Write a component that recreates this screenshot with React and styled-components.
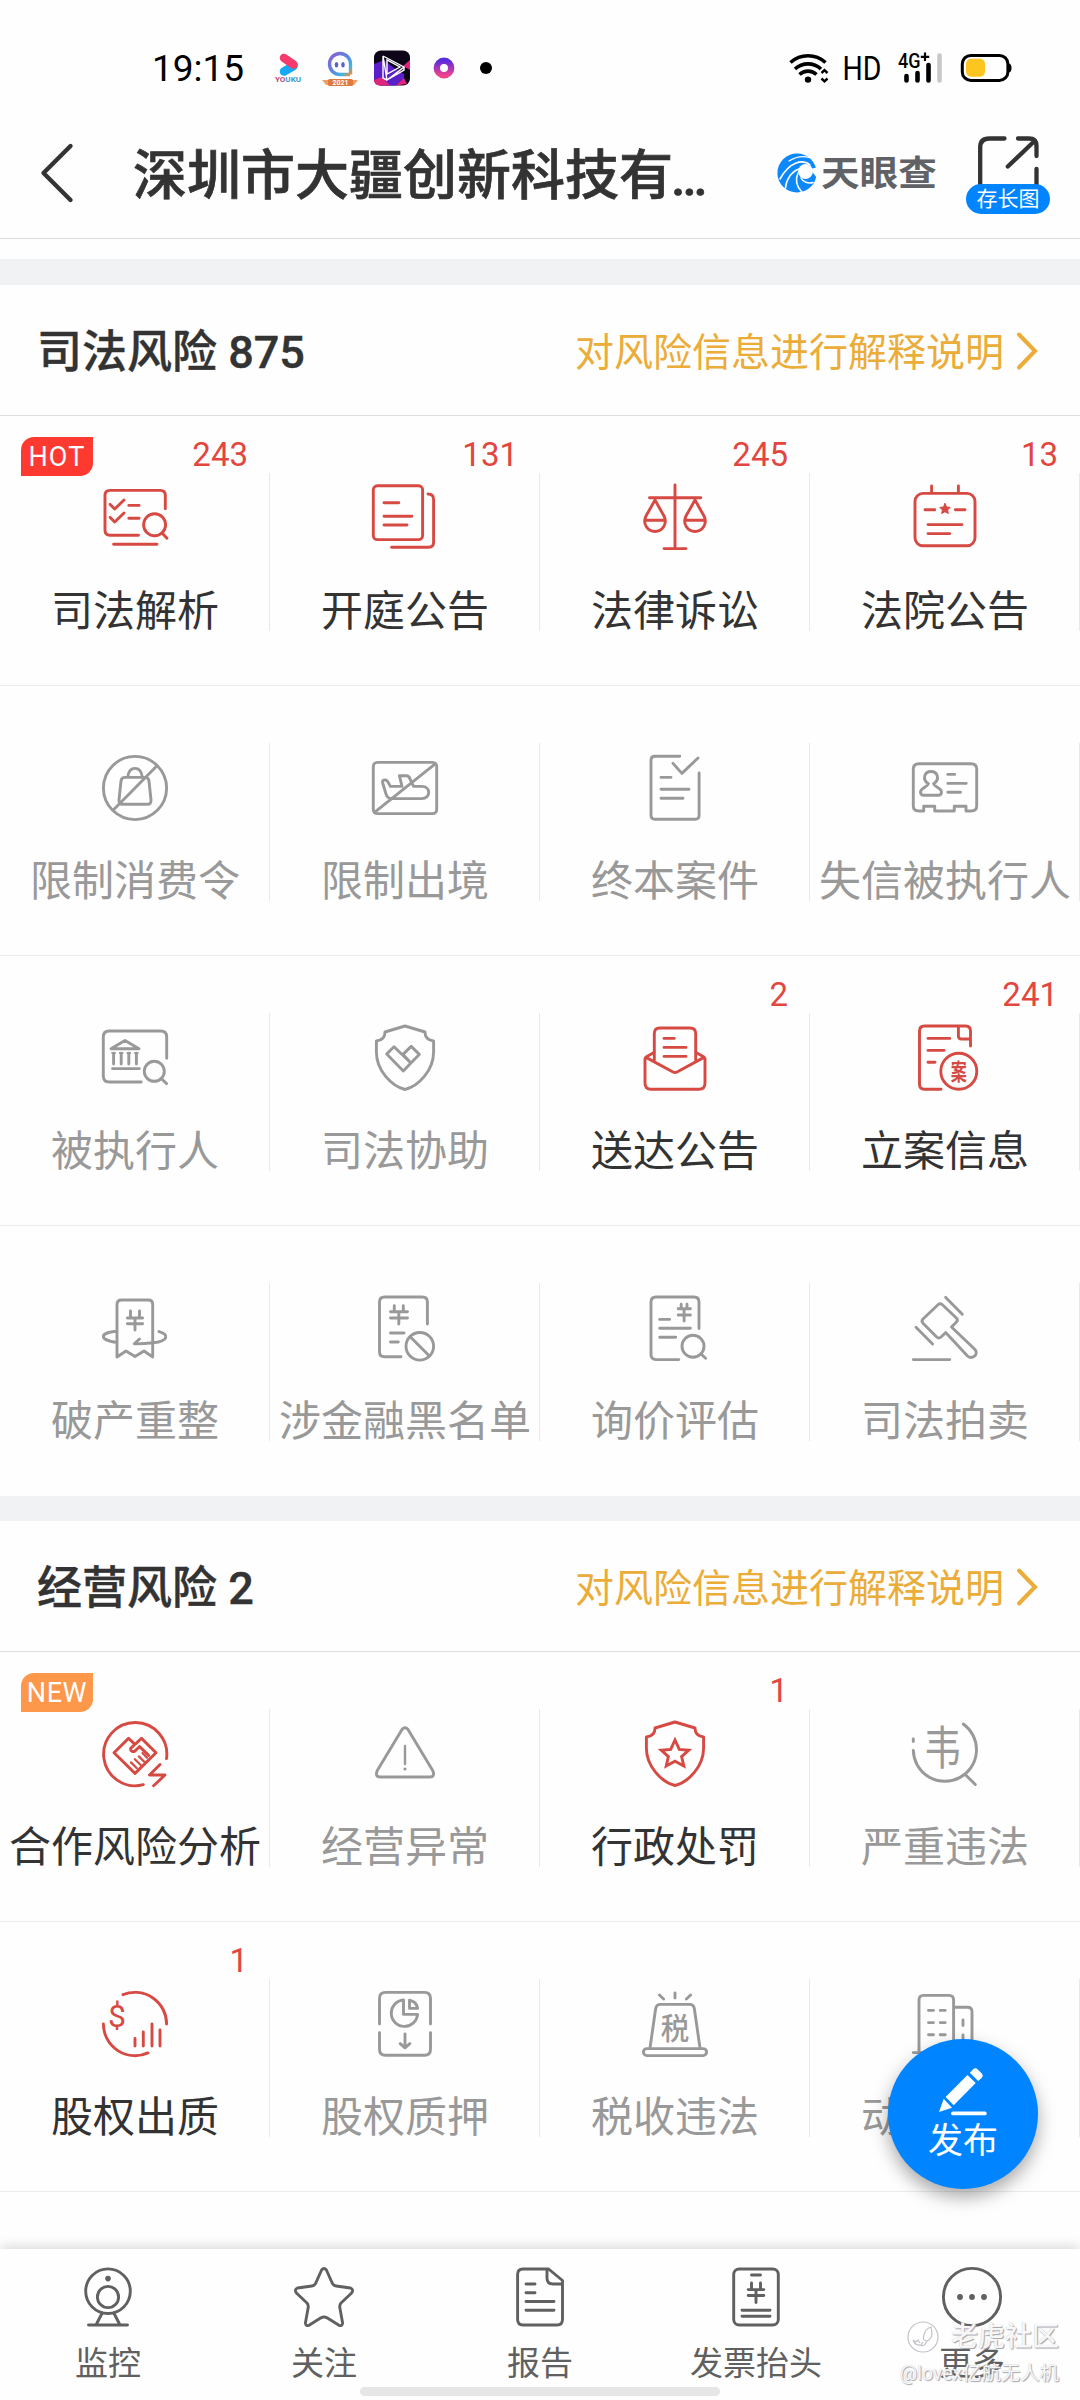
import React from "react";
import styled, { createGlobalStyle } from "styled-components";

const RED = "#d64a43";
const GREY = "#999";
const FONT = 'Roboto, "Noto Sans CJK SC", sans-serif';

const GlobalStyle = createGlobalStyle`
  * { box-sizing: border-box; }
  body { margin: 0; background: #fff; font-family: ${FONT}; }
  svg { display: block; overflow: visible; }
`;

const Screen = styled.div`
  position: relative;
  display: flex;
  flex-direction: column;
  width: 1080px;
  height: 2400px;
  overflow: hidden;
  background: #fefefe;
`;

/* ---------- status bar ---------- */

const StatusBar = styled.div`
  display: flex;
  align-items: center;
  flex: none;
  height: 108px;
  margin-top: 14px;
  padding: 0 68px 0 152px;
`;

const Clock = styled.span`
  width: 121px;
  padding-top: 1px;
  font-size: 37px;
  line-height: 44px;
  color: #000;
  white-space: nowrap;
`;

const StatusIcons = styled.div`
  display: flex;
  align-items: center;
  margin-left: ${(p) => (p.$right ? "auto" : "0")};
`;

/* ---------- title bar ---------- */

const TitleBar = styled.header`
  display: flex;
  align-items: center;
  flex: none;
  height: 131px;
  margin-top: -14px;
  padding: 0 30px 0 40px;
  border-bottom: 1px solid #dcdcde;
`;

const Title = styled.h1`
  width: 581px;
  margin: 0 0 0 59px;
  padding-top: 9px;
  font-size: 54px;
  font-weight: 500;
  line-height: 70px;
  color: #333;
  white-space: nowrap;
  -webkit-text-stroke: 0.7px #333;
`;

const Ellipsis = styled.span`
  margin-left: -2px;
  letter-spacing: -1px;
  font-size: 51px;
`;

const Brand = styled.div`
  display: flex;
  align-items: center;
  gap: 4px;
  margin-left: 63px;
`;

const BrandName = styled.span`
  font-size: 38.6px;
  line-height: 40px;
  font-weight: 700;
  color: #606266;
  white-space: nowrap;
  transform: translateY(1px) scaleY(0.9);
`;

const Share = styled.button`
  display: flex;
  flex-direction: column;
  width: 84px;
  margin-left: auto;
  padding: 0;
  border: 0;
  background: none;
`;

const SharePill = styled.span`
  width: 84px;
  height: 30px;
  border-radius: 15px;
  background: #0084ff;
  color: #fff;
  font: 400 21px/30px ${FONT};
  text-align: center;
`;

/* ---------- sections ---------- */

const Strip = styled.div`
  flex: none;
  height: 20px;
`;

const Band = styled.div`
  flex: none;
  height: ${(p) => p.$h}px;
  background: #f1f2f4;
`;

const SectionHead = styled.div`
  display: flex;
  align-items: center;
  justify-content: space-between;
  height: 131px;
  padding: 6px 42px 0 37px;
  border-bottom: 1px solid #dedede;
`;

const SectionTitle = styled.h2`
  margin: 0;
  font-size: 45px;
  font-weight: 500;
  line-height: 60px;
  color: #333;
  -webkit-text-stroke: 0.4px #333;
`;

const ExplainLink = styled.a`
  display: flex;
  align-items: center;
  gap: 12px;
  font-size: 39px;
  line-height: 50px;
  color: #ebac38;
`;

const Chevron = styled.svg`
  margin-top: -4px;
`;

const Grid = styled.div`
  display: grid;
  grid-template-columns: repeat(4, 270px);
`;

const Cell = styled.div`
  position: relative;
  display: flex;
  flex-direction: column;
  align-items: center;
  height: 270px;
  padding-top: 66px;
  border-bottom: ${(p) => (p.$last ? "0" : "1px solid #ebebeb")};
  background: linear-gradient(#e9e9e9, #e9e9e9) no-repeat right 57px / 1px 158px;
  color: ${(p) => (p.$on ? RED : GREY)};
`;

const CellLabel = styled.span`
  margin-top: 33px;
  font-size: 42px;
  line-height: 50px;
  white-space: nowrap;
  color: ${(p) => (p.$on ? "#333" : "#999")};
`;

const Count = styled.span`
  position: absolute;
  top: 20px;
  right: 22px;
  font-size: 33px;
  line-height: 38px;
  color: #e2463f;
`;

const Tag = styled.span`
  position: absolute;
  top: 21px;
  left: 21px;
  width: 72px;
  height: 39px;
  border-radius: 13px 0 13px 0;
  background: ${(p) => (p.$new ? "#fd974a" : "#fe3a30")};
  color: #fff;
  font-size: 27px;
  line-height: 41px;
  letter-spacing: ${(p) => (p.$new ? "0.6px" : "1.2px")};
  text-align: center;
`;

/* ---------- floating button ---------- */

const Publish = styled.button`
  position: absolute;
  left: 888px;
  top: 2039px;
  display: flex;
  flex-direction: column;
  align-items: center;
  gap: 5px;
  width: 150px;
  height: 150px;
  padding: 26px 0 0;
  border: 0;
  border-radius: 50%;
  background: #0084ff;
  box-shadow: 0 8px 18px rgba(0, 0, 0, 0.34);
  color: #fff;
  font: 400 35px/44px ${FONT};
`;

/* ---------- bottom navigation ---------- */

const NavBar = styled.nav`
  display: grid;
  grid-template-columns: repeat(5, 216px);
  flex: none;
  height: 151px;
  margin-top: auto;
  background: #fefefe;
  box-shadow: 0 -2px 12px rgba(0, 0, 0, 0.16);
`;

const NavItem = styled.div`
  display: flex;
  flex-direction: column;
  align-items: center;
  padding-top: 18px;
  color: #606060;
  font-size: 33px;
  line-height: 40px;
`;

const NavLabel = styled.span`
  margin-top: 17px;
`;

const HomeIndicator = styled.div`
  position: absolute;
  left: 360px;
  top: 2387px;
  width: 360px;
  height: 9px;
  border-radius: 5px;
  background: #e6e6e6;
`;

const Watermark = styled.div`
  position: absolute;
  right: 21px;
  top: 2319px;
  display: flex;
  flex-direction: column;
  align-items: flex-end;
  color: rgba(255, 255, 255, 0.92);
  text-shadow: 1px 1px 1px #a2a2aa, 0 0 1px #bcbcc2;
  white-space: nowrap;
`;

const WatermarkTop = styled.div`
  display: flex;
  align-items: center;
  gap: 12px;
  font-size: 27px;
  font-weight: 500;
  line-height: 36px;
`;

const WatermarkUser = styled.div`
  margin-top: 5px;
  font-size: 19.4px;
  line-height: 28px;
`;

/* ---------- icons ---------- */

const LineIcon = ({ size = 72, w = 2.9, children }) => (
  <svg
    width={size}
    height={size}
    viewBox={`${-size / 2} ${-size / 2} ${size} ${size}`}
    fill="none"
    stroke="currentColor"
    strokeWidth={w}
    strokeLinecap="round"
    strokeLinejoin="round"
  >
    {children}
  </svg>
);

const Glyph = ({ x, y, size, sx = 1, weight = 400, children }) => (
  <text
    transform={`translate(${x} ${y}) scale(${sx} 1)`}
    fontFamily='"Noto Sans CJK SC", sans-serif'
    fontSize={size}
    fontWeight={weight}
    textAnchor="middle"
    fill="currentColor"
    stroke="none"
  >
    {children}
  </text>
);

const SHIELD =
  "M0-32L-20-26C-20-20-23-17.5-28.6-17V-6C-28.6 12-14 28 0 31.5C14 28 28.6 12 28.6-6V-17C23-17.5 20-20 20-26Z";

const icons = {
  analysis: (
    <>
      <path d="M30.3-9.3V-22.6Q30.3-27.6 25.3-27.6H-25Q-30-27.6-30-22.6V12.3Q-30 17.3-25 17.3H3.5" />
      <path d="M-24.8-13.6L-20.3-9L-11-18M-24.8-.6L-20.3 4L-11-5M-6.2-12.6H4.1M-6.2.3H4.1M-21.4 26.3H22" />
      <circle cx="19.6" cy="6.7" r="11" />
      <path d="M27.3 15.3L32 20.2" />
    </>
  ),
  hearing: (
    <>
      <rect x="-31.7" y="-32.2" width="49.3" height="53.8" rx="4" />
      <path d="M-21-15.3H-6.2M-21-1.7H6.9M-21 7H2M23-24Q28.6-24 28.6-18.5V24.3Q28.6 29.3 23.6 29.3H-13.4" />
    </>
  ),
  scales: (
    <>
      <path d="M0-33V30.6M-25.5-20.3H25.8M-11 30.6H11" />
      <path d="M-20-18L-29-2C-33 6-27 13.5-20 13.5S-7 6-11-2ZM-30.3 2.3H-9.7" />
      <path d="M20-18L11-2C7 6 13 13.5 20 13.5S33 6 29-2ZM9.7 2.3H30.3" />
    </>
  ),
  courtNotice: (
    <>
      <rect x="-30" y="-24.6" width="60" height="52.4" rx="8" />
      <path d="M-13.4-32V-25.5M13.4-32V-25.5M-20-8.3H-10.3M10.3-8.3H20M-17 6.6H17M-17 15.6H4.8" />
      <path
        d="M0-14.5L1.6-11L5.2-10.6L2.6-8L3.3-4.5L0-6.3L-3.3-4.5L-2.6-8L-5.2-10.6L-1.6-11Z"
        fill="currentColor"
        strokeWidth="1"
      />
    </>
  ),
  noSpend: (
    <>
      <circle r="31.6" />
      <path d="M22-22.3L-21.7 22M-7.2-11.3C-6.5-17-3.5-19.6 0-19.6S6.5-17 7.2-11.3M-10-10.6H10Q13.6-10.6 14-7L16 12Q16.3 16.3 12.5 16.3H-12.5Q-16.3 16.3-16 12L-14-7Q-13.6-10.6-10-10.6Z" />
    </>
  ),
  noExit: (
    <>
      <rect x="-31.7" y="-25.6" width="63.4" height="51.2" rx="4" />
      <path d="M-30.5 24.3L30.5-24.3M-22.3-5Q-23-8-20.5-8Q-18-8.5-16.5-5L-14.5-1.6H-3L-5.6-12.3H1.5Q3.8-12.3 4.8-9.5L8.6-1.6H16.8C26 -1.6 26 10.6 16.8 10.6H-13Q-17.8 10.6-19 6Z" />
    </>
  ),
  finalCase: (
    <path d="M4.8-31.7H-20Q-24-31.7-24-27.7V27.3Q-24 31.3-20 31.3H20.1Q24.1 31.3 24.1 27.3V-15M-2-24.6L6.9-14.6L23-30M-14-10.6H-4M-14 1.3H14M-14 10.3H8" />
  ),
  dishonest: (
    <path d="M-26-24.3H26Q31.7-24.3 31.7-19V18Q31.7 23 26 23H21V18.3H9.3V23H-10.3V18.3H-21.3V23H-26Q-31.7 23-31.7 18V-19Q-31.7-24.3-26-24.3ZM-16.5-4.3C-23-8-21-16.5-14-16.5S-5-8-11.5-4.3C-10.5-1-3.5 0-3.5 4Q-3.5 7.3-7 7.3H-21Q-24.5 7.3-24.5 4C-24.5 0-17.5-1-16.5-4.3ZM2.8-13.6H9.7M2.8-4.6H21.2M2.8 4.3H15.5" />
  ),
  executed: (
    <>
      <path d="M31.7.3V-21Q31.7-27 25.7-27H-25.7Q-31.7-27-31.7-21V18Q-31.7 24-25.7 24H6.2" />
      <path d="M-24-9.3L-10-17.5L4-9.3ZM-22.5 10.6H4.3M-21.4-4.8V6M-13.8-4.8V6M-6.2-4.8V6M1.4-4.8V6" />
      <path d="M-22.8-5H-20M-15.2-5H-12.4M-7.6-5H-4.8M0-5H2.8" strokeWidth="2" />
      <circle cx="19.3" cy="13.3" r="10" />
      <path d="M27 21.3L31.6 25.6" />
    </>
  ),
  assist: (
    <>
      <path d={SHIELD} />
      <path d="M-18.3-4L-11-11.3L5.9 5L-1.7 13ZM-2-3.6L6.2-11.6L14.3-3.6L5.9 5Z" />
    </>
  ),
  delivery: (
    <>
      <path d="M-20.7 2V-24.5Q-20.7-30-15.2-30H15.2Q20.7-30 20.7-24.5V2M-11-19.6H-.7M-11-10.6H11M-11-1.6H11" />
      <path d="M-21-5.5L-29-1Q-30 0-30 1V25Q-30 31.3-24 31.3H24Q30 31.3 30 25V1Q30 0 29-1L21-5.5M-29-.6L-2 14Q0 15 2 14L29-.6" />
    </>
  ),
  filing: (
    <>
      <path d="M-4 31.3H-20.5Q-25.5 31.3-25.5 26.3V-27Q-25.5-32 -20.5-32H20.5Q25.5-32 25.5-27V-12M13.4-31V-22Q13.4-19 16.5-19H25M-17-19.6H4.8M-17-7.6H-1M-17 4.3H-10" />
      <circle cx="13.8" cy="13.3" r="18" />
      <Glyph x={13.8} y={22} size={23} sx={0.7} weight={700}>案</Glyph>
    </>
  ),
  bankruptcy: (
    <path d="M-18 29V-23.5Q-18-28-13.5-28H13.2Q17.7-28 17.7-23.5V29L9 23L0 28.5L-9 23ZM-4.5-17V-11M4.5-17V-11M-7.6-10H7.6M-7.6-4.3H7.6M0-10V2M-19 3.3C-36 5-36 12-18 14.4M24 3.6C34 6 34 13 18 14.8Q8 16-.7 15.8L4.5 11" />
  ),
  blacklist: (
    <>
      <path d="M-4 28.7H-20.5Q-25.5 28.7-25.5 23.7V-26Q-25.5-31-20.5-31H17.4Q22.4-31 22.4-26V-4M-10.7-22.3V-17M-1.7-22.3V-17M-14.5-16.3H2.5M-14.5-10H2.5M-6.2-16V-4M-14.5 5H-1M-14.5 14H-6.7" />
      <circle cx="14.8" cy="18.3" r="13.8" />
      <path d="M5.2 8.7L24.4 28" />
    </>
  ),
  inquiry: (
    <>
      <path d="M3.8 31.6H-19Q-24 31.6-24 26.6V-26Q-24-31-19-31H19Q24-31 24-26V.5M6.2-23.8V-20M12-23.8V-20M3.2-19.3H15.4M3.2-13H15.4M9.1-19V-7M-15.3-8.6H-5.4M-15.3.3H15.4M-15.3 9.3H.7" />
      <circle cx="18" cy="18.3" r="11" />
      <path d="M26 26L30.6 30.3" />
    </>
  ),
  auction: (
    <path d="M-7-23.2Q-4.8-25.2-2.6-23.2L11.4-10Q13.4-8 11.4-6L6.5-1L30 21.5C34 26.5 27 32 22.5 28L.7 4.6L-4 9Q-6.2 11-8.3 9L-22-4.8Q-24-7-22-9ZM.7-30.6L17.3-13.8M-29-.8L-12.4 16M-31.7 31.6H4.8" />
  ),
  coop: (
    <>
      <path d="M31.5 4.6A31.6 31.6 0 1 0 8.3 30.7M25 10.5L14.5 21H30L18.6 31.8" />
      <path d="M-21-1.3L-6.5-15.6L0-9.6L6.5-15.6L21-1.3L0 19.4ZM0-9.8L-4.4-5.5C-4.8-3-2-1.6 0-3L4.6-7.4L13.6 1.4" />
      <path d="M3.8 2.4L9.5 8M-.2 5.2L5.7 11M-4 8.4L1.8 14.2M7.5-1L12 3.8" strokeWidth="2.2" />
    </>
  ),
  abnormal: (
    <>
      <path d="M-3-24.5Q0-28 3-24.5L28 17Q30 23 25 23H-25Q-30 23-28 17Z" />
      <path d="M0-8V10" strokeWidth="2.4" />
      <circle cy="15" r="1.6" fill="currentColor" stroke="none" />
    </>
  ),
  penalty: (
    <>
      <path d={SHIELD} />
      <path
        strokeLinejoin="miter"
        d="M0-14L4.3-4.6L13.8-3.8L6.6 2.6L8.8 12L0 7.2L-8.8 12L-6.6 2.6L-13.8-3.8L-4.3-4.6Z"
      />
    </>
  ),
  illegal: (
    <>
      <path d="M18.3-30A31.6 31.6 0 1 1-31.7-3.6M-31.7-15V-12.5M20.7 21L30.3 30.5" />
      <Glyph x={-2.5} y={9.5} size={46} sx={0.82}>韦</Glyph>
    </>
  ),
  equityOut: (
    <>
      <path d="M-12-29.3A31.6 31.6 0 0 1 31.6 0M-31.6 0A31.6 31.6 0 0 0 13 28.9M0 14.5V22M8.3 8V22M17 0V22M25 6V22" />
      <text x="-18" y="2.6" fontFamily="Roboto, sans-serif" fontSize="32" textAnchor="middle" fill="currentColor" stroke="none">
        $
      </text>
    </>
  ),
  equityPledge: (
    <path d="M-25.5 0V-25.6Q-25.5-31.6-19.5-31.6H19.5Q25.5-31.6 25.5-25.6V0M-25.5 8.6V25.3Q-25.5 31.3-19.5 31.3H19.5Q25.5 31.3 25.5 25.3V8.6M-1.5-24A13.2 13.2 0 1 0 12.6-9.6H-1.5ZM4.5-23.8Q11.5-22.5 12.6-15.6H4.5ZM0 10V23.5M-4.8 19.6L0 23.8L4.8 19.6" />
  ),
  tax: (
    <>
      <path d="M0-31V-26M-15.6-29L-11.4-25M15.6-29L11.4-25M-25 24L-19.4-15Q-18.8-19.6-14.5-19.6H14.5Q18.8-19.6 19.4-15L25 24" />
      <rect x="-31.6" y="24.6" width="63.2" height="7" rx="3.5" />
      <Glyph x={0} y={14.8} size={30} sx={0.95} weight={500}>税</Glyph>
    </>
  ),
  chattel: (
    <path d="M-31.7 28.6H31M-26 28.6V-24Q-26-28.6-21.4-28.6H4Q8.6-28.6 8.6-24V28.6M8.6-16.8H22.5Q27-16.8 27-12.3V28.6M-16.5-13.6H-11.5M-4.8-13.6H.2M-16.5-1.4H-11.5M-4.8-1.4H.2M-16.5 10.7H-11.5M-4.8 10.7H.2M18-4V1.5M18 11V17" />
  ),
  monitor: (
    <>
      <circle cy="-5.8" r="22.3" />
      <circle r="10.6" />
      <circle cy="-18.4" r="2.8" fill="currentColor" stroke="none" />
      <path d="M-5.8 16L-11.5 27M5.8 16L11.5 27M-19.5 28H19.5" />
    </>
  ),
  star: (
    <path d="M-2.4-27Q0-30 2.4-27L8.2-14Q9.4-11.3 12.2-11L26.5-9Q30-7.6 27.6-4L17 6Q15.4 8 15.8 10.6L18.6 26Q18.4 29.6 15 28.3L3.4 21Q0 19-3.4 21L-15 28.3Q-18.4 29.6-18.6 26L-15.8 10.6Q-15.4 8-17 6L-27.6-4Q-30-7.6-26.5-9L-12.2-11Q-9.4-11.3-8.2-14Z" />
  ),
  report: (
    <path d="M8.6-28H-17Q-22.4-28-22.4-22.6V22.6Q-22.4 28-17 28H17Q22.5 28 22.5 22.6V-16.5ZM7-27.5V-19Q7-13 13-13H22M-14-13H-5M-14-4.2H-5M-14 4.5H14M-14 13.3H14" />
  ),
  invoice: (
    <>
      <rect x="-22.3" y="-28" width="44.6" height="56" rx="5.5" />
      <path d="M-4.5-22H4.5M-4.5-14V-8.5M4.5-14V-8.5M-7.8-7.4H7.8M-7.8-1.5H7.8M0-7V5.5M-14 13.3H14M-14 19.2H14" />
    </>
  ),
  more: (
    <>
      <circle r="28.6" />
      <g fill="currentColor" stroke="none">
        <circle cx="-12" r="2.9" />
        <circle r="2.9" />
        <circle cx="12" r="2.9" />
      </g>
    </>
  ),
};

const NotificationIcons = () => (
  <svg width="222" height="40" viewBox="273 48 222 40">
    <defs>
      <linearGradient id="ghost" x1="0" y1="0" x2="1" y2="1">
        <stop offset="0" stopColor="#8a5fd0" />
        <stop offset="0.5" stopColor="#5b86e0" />
        <stop offset="0.8" stopColor="#3fb6e0" />
        <stop offset="1" stopColor="#f08a3c" />
      </linearGradient>
      <linearGradient id="ring" x1="0" y1="0" x2="0" y2="1">
        <stop offset="0" stopColor="#5a2be0" />
        <stop offset="1" stopColor="#f0428c" />
      </linearGradient>
    </defs>
    <path d="M284 71.5L293.5 66" stroke="#16a8f0" strokeWidth="8.5" strokeLinecap="round" />
    <path d="M284 58L293.5 64.5" stroke="#f43b6c" strokeWidth="8.5" strokeLinecap="round" />
    <text x="288" y="82.4" fontFamily="Roboto, sans-serif" fontSize="7.5" fontWeight="700" textAnchor="middle" textLength="26" lengthAdjust="spacingAndGlyphs">
      <tspan fill="#c2447a">YO</tspan>
      <tspan fill="#3a9cc8">UKU</tspan>
    </text>
    <path d="M350 74.5H340A10.5 10.5 0 1 1 350.5 64V74.5" fill="none" stroke="url(#ghost)" strokeWidth="3.4" />
    <ellipse cx="336.5" cy="64.8" rx="1.8" ry="2.8" fill="#5a62c8" />
    <ellipse cx="343" cy="64.8" rx="1.8" ry="2.8" fill="#5a62c8" />
    <path d="M322 80H358L354 85H326Z" fill="#f0a060" />
    <rect x="328" y="79" width="25" height="7" rx="1.5" fill="#e07a3c" />
    <text x="340.5" y="85" fontFamily="Roboto, sans-serif" fontSize="7" fontWeight="700" textAnchor="middle" fill="#fff">2021</text>
    <rect x="374" y="50.5" width="36" height="35" rx="7" fill="#0c0618" />
    <path d="M374 64L384 60L394 68L404 74V79L396 85.5H381Q374 85.5 374 78.5Z" fill="#5a1fc8" />
    <path d="M374 80L382 77L390 85.5H381Q374 85.5 374 80ZM403 66L410 60V70ZM396 85.5L404 78L407 84Z" fill="#e0247a" />
    <path d="M383 56L404 67L387 80L383 56V78L387 80M387 60V74L400 67ZM404 67V70L387 80" fill="none" stroke="#fff" strokeWidth="1.4" />
    <circle cx="444" cy="68" r="7.2" fill="none" stroke="url(#ring)" strokeWidth="6.4" />
    <circle cx="486" cy="68" r="6" />
  </svg>
);

const SystemIcons = () => (
  <svg width="223" height="36" viewBox="789 50 223 36">
    <g fill="none" stroke="#000" strokeWidth="3.6">
      <path d="M790.5 62.5A26 26 0 0 1 825.5 62.5" />
      <path d="M795 69A19 19 0 0 1 821 69" />
      <path d="M799.5 74.5A12.5 12.5 0 0 1 816.5 74.5" />
      <path d="M821.5 73L824.5 70.2L827.5 73M821.5 78.5L824.5 81.3L827.5 78.5" strokeWidth="2.4" />
    </g>
    <circle cx="808" cy="79.6" r="3.2" />
    <text x="842.5" y="79.8" fontFamily="Roboto, sans-serif" fontSize="33.5" textLength="39" lengthAdjust="spacingAndGlyphs">HD</text>
    <text x="898" y="68" fontFamily="Roboto, sans-serif" fontSize="21" fontWeight="500" textLength="22.5" lengthAdjust="spacingAndGlyphs">4G</text>
    <path d="M925 52.5V61M920.8 56.8H929.2" stroke="#000" strokeWidth="2.2" />
    <g strokeWidth="4.6" strokeLinecap="round" stroke="#000">
      <path d="M906.5 76V80.5M917.5 73V80.5M928.5 65V80.5" />
      <path d="M939.5 55.5V80.5" stroke="#c8c8c8" />
    </g>
    <rect x="962.3" y="55.4" width="45.6" height="25" rx="8.5" fill="none" stroke="#000" strokeWidth="3" />
    <path d="M1009 63.5Q1011.5 64 1011.5 68T1009 72.5Z" />
    <rect x="966" y="58.8" width="19" height="18" rx="5" fill="#fcc520" />
  </svg>
);

const BrandMark = () => (
  <svg width="40" height="40" viewBox="0 0 40 40" fill="none" stroke="#fefefe" strokeLinecap="round">
    <circle cx="20" cy="20" r="19.6" fill="#0d88fb" stroke="none" />
    <circle cx="28.5" cy="18.5" r="7.4" fill="#fefefe" stroke="none" />
    <path d="M33 16L40 14.5V25Z" fill="#fefefe" stroke="none" />
    <path d="M32 4.5Q22 1.5 12 8" strokeWidth="1.3" />
    <path d="M33 12C26 6 13 8 3 26" strokeWidth="1.6" />
    <path d="M22 16C14 19 9 27 8.5 35" strokeWidth="1.6" />
    <path d="M21 20C17.5 28 20 34 25 39.2" strokeWidth="1.6" />
    <path d="M24 25C26 29 31 31 36 29.5" strokeWidth="1.5" />
  </svg>
);

const PencilIcon = () => (
  <svg width="56" height="50" viewBox="-28 -50 56 50" fill="#fff">
    <path d="M-17.4-18L4.5-40L12.7-32L-9.3-9.8Z" />
    <path d="M6.8-42.2L10-45.6Q12.4-48 14.8-45.6L18.6-41.8Q20.8-39.4 18.6-37L15.2-34Z" />
    <path d="M-24-3L-19.3-16.2L-11-7.2Z" />
    <path d="M-10-1.6H21.8" stroke="#fff" strokeWidth="3.8" strokeLinecap="round" />
  </svg>
);

const TigerMark = () => (
  <svg width="32" height="32" viewBox="-16 -16 32 32" fill="none" stroke="#c2c2c8" strokeWidth="1.2">
    <circle r="15" fill="rgba(255,255,255,.7)" />
    <path d="M8-10Q2-8 1-2Q-1 4 4 4Q9 2 9-4ZM-10 3Q-8 9-2 8L0 5M-10 3L-7 5L-5 3L-3 6M4 4Q2 9-2 9" />
  </svg>
);

/* ---------- data ---------- */

const judicial = [
  { icon: "analysis", label: "司法解析", count: 243, on: true, tag: "HOT" },
  { icon: "hearing", label: "开庭公告", count: 131, on: true },
  { icon: "scales", label: "法律诉讼", count: 245, on: true },
  { icon: "courtNotice", label: "法院公告", count: 13, on: true },
  { icon: "noSpend", label: "限制消费令" },
  { icon: "noExit", label: "限制出境" },
  { icon: "finalCase", label: "终本案件" },
  { icon: "dishonest", label: "失信被执行人" },
  { icon: "executed", label: "被执行人" },
  { icon: "assist", label: "司法协助" },
  { icon: "delivery", label: "送达公告", count: 2, on: true },
  { icon: "filing", label: "立案信息", count: 241, on: true },
  { icon: "bankruptcy", label: "破产重整" },
  { icon: "blacklist", label: "涉金融黑名单" },
  { icon: "inquiry", label: "询价评估" },
  { icon: "auction", label: "司法拍卖" },
];

const operating = [
  { icon: "coop", label: "合作风险分析", on: true, tag: "NEW" },
  { icon: "abnormal", label: "经营异常" },
  { icon: "penalty", label: "行政处罚", count: 1, on: true },
  { icon: "illegal", label: "严重违法" },
  { icon: "equityOut", label: "股权出质", count: 1, on: true },
  { icon: "equityPledge", label: "股权质押" },
  { icon: "tax", label: "税收违法" },
  { icon: "chattel", label: "动产抵押" },
];

const nav = [
  { icon: "monitor", label: "监控" },
  { icon: "star", label: "关注" },
  { icon: "report", label: "报告" },
  { icon: "invoice", label: "发票抬头" },
  { icon: "more", label: "更多" },
];

const RiskSection = ({ title, items, borderless }) => (
  <section>
    <SectionHead>
      <SectionTitle>{title}</SectionTitle>
      <ExplainLink>
        对风险信息进行解释说明
        <Chevron width="22" height="40" viewBox="0 0 22 40" fill="none" stroke="currentColor" strokeWidth="4" strokeLinecap="round">
          <path d="M3 3.5L19 20L3 36.5" />
        </Chevron>
      </ExplainLink>
    </SectionHead>
    <Grid>
      {items.map((it, i) => (
        <Cell key={it.label} $on={it.on} $last={borderless && i >= items.length - 4}>
          {it.tag && <Tag $new={it.tag === "NEW"}>{it.tag}</Tag>}
          {it.count && <Count>{it.count}</Count>}
          <LineIcon>{icons[it.icon]}</LineIcon>
          <CellLabel $on={it.on}>{it.label}</CellLabel>
        </Cell>
      ))}
    </Grid>
  </section>
);

export default function App() {
  return (
    <Screen>
      <GlobalStyle />
      <StatusBar>
        <Clock>19:15</Clock>
        <StatusIcons>
          <NotificationIcons />
        </StatusIcons>
        <StatusIcons $right>
          <SystemIcons />
        </StatusIcons>
      </StatusBar>
      <TitleBar>
        <svg width="34" height="60" viewBox="0 0 34 60" fill="none" stroke="#333" strokeWidth="4.4" strokeLinecap="round" strokeLinejoin="round">
          <path d="M30.5 3L3.5 30L30.5 57" />
        </svg>
        <Title>
          深圳市大疆创新科技有<Ellipsis>…</Ellipsis>
        </Title>
        <Brand>
          <BrandMark />
          <BrandName>天眼查</BrandName>
        </Brand>
        <Share>
          <svg width="84" height="51" viewBox="0 0 84 51" fill="none" stroke="#333" strokeWidth="4.3" strokeLinecap="round">
            <path d="M14.2 53V14.5Q14.2 5.5 23.2 5.5H38.5M52 5.5H63Q70.5 5.5 70.5 13V23M70.5 36V53M41.8 33.5L69 7.5" />
          </svg>
          <SharePill>存长图</SharePill>
        </Share>
      </TitleBar>
      <Strip />
      <Band $h={26} />
      <RiskSection title="司法风险 875" items={judicial} borderless />
      <Band $h={25} />
      <RiskSection title="经营风险 2" items={operating} />
      <NavBar>
        {nav.map((n) => (
          <NavItem key={n.label}>
            <LineIcon size={60}>{icons[n.icon]}</LineIcon>
            <NavLabel>{n.label}</NavLabel>
          </NavItem>
        ))}
      </NavBar>
      <Publish>
        <PencilIcon />
        发布
      </Publish>
      <HomeIndicator />
      <Watermark>
        <WatermarkTop>
          <TigerMark />
          老虎社区
        </WatermarkTop>
        <WatermarkUser>@lovex亿航无人机</WatermarkUser>
      </Watermark>
    </Screen>
  );
}
